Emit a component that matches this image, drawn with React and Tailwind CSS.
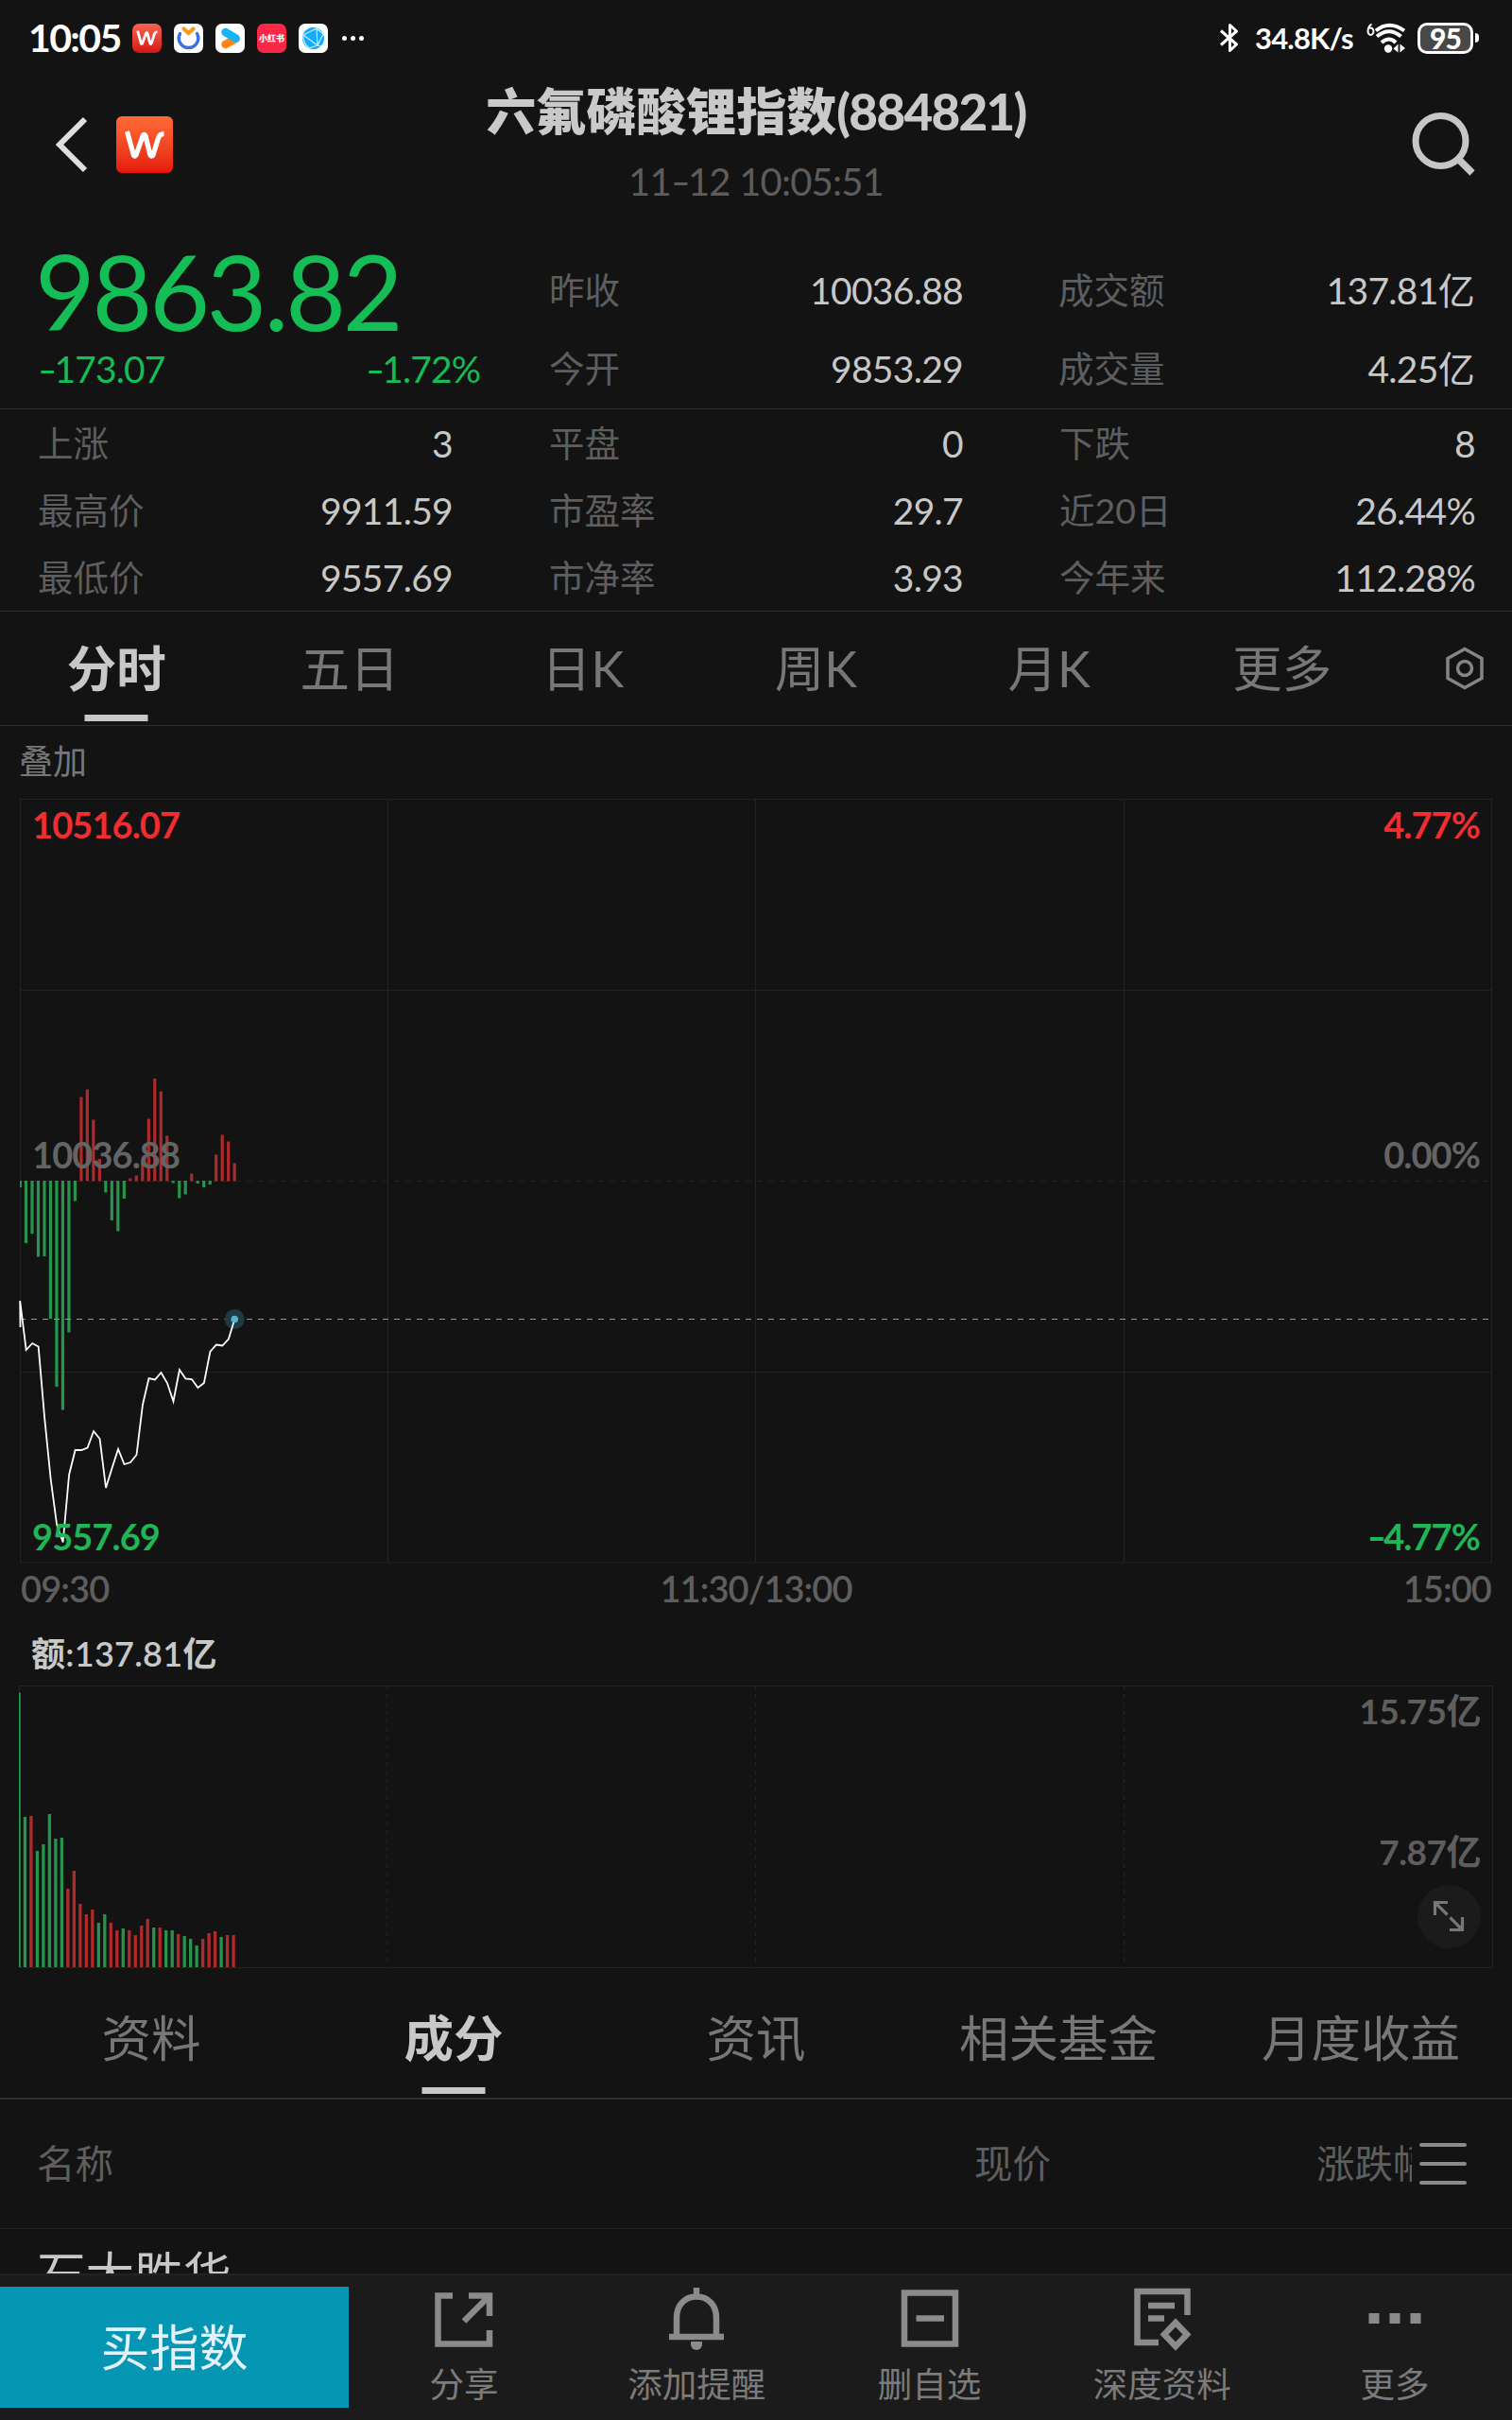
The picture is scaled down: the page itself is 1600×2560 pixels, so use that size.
import React from "react";

const GREEN = "#26944c";
const RED = "#b02a2b";
const STEP = 6.49;

// Signed bar lengths around the previous close, in chart pixels
const momentum = [
  -7, -66, -56, -80.5, -80, -146, -218, -242.5, -160.5, -21.5, 89, 97, 65, 23.5, -12.5, -42, -53.5, -19,
  3, 6, 21, 66, 108.5, 95, 48, -2.5, -18.5, -14.5, 8, -3, -7, -4, 28, 49, 42, 19,
];
const price = [
  531, 583, 576, 579.5, 655, 719.5, 768, 786.5, 715, 689, 689, 686.5, 669, 677, 729, 708, 688, 704, 702,
  694, 641, 613, 614.5, 607, 618, 637.5, 604, 613.5, 614, 623, 618, 585, 577.5, 578.5, 571.5, 550.5,
];
const volume = [
  290.5, 159, 160, 123, 130, 162, 136, 137, 83, 102, 67, 56, 61, 47, 56, 47, 39, 41, 39, 34, 44, 51, 42, 42,
  39, 39, 35, 33, 30, 23, 30, 36, 38, 32, 34, 34,
];
const volumeUp = "001000001111100110111101001000111011";

function AppBadge({ children, className }) {
  return <div className={`flex size-[31px] items-center justify-center overflow-hidden rounded-[7px] ${className}`}>{children}</div>;
}

function LogoW({ className }) {
  return (
    <svg viewBox="0 0 42 30" className={className} fill="none" stroke="white" strokeWidth="5.2" strokeLinejoin="round">
      <path d="M2.500 1 9.500 26.500Q10.500 28 12 26L19 6Q20.500 2.500 22 6L27 26Q28.500 28.500 30 26L35.500 8Q37 3.500 41.500 3.500" />
    </svg>
  );
}

function StatusBar() {
  return (
    <div className="flex h-[80px] items-center justify-between pl-[30px] pr-[35px] text-white">
      <div className="flex items-center">
        <span className="w-[110px] whitespace-nowrap text-[41px] font-bold leading-[50px] tracking-[-1.6px]">10:05</span>
        <div className="flex gap-[13px]">
          <AppBadge className="bg-linear-to-b from-[#f8604f] to-[#d40f12]">
            <LogoW className="h-[16px] w-[23px]" />
          </AppBadge>
          <AppBadge className="bg-white">
            <svg viewBox="0 0 31 31" className="size-[31px]" fill="none">
              <path d="M6.500 10.500A10.200 10.200 0 1 0 24.500 10.500" stroke="#3d6fe6" strokeWidth="3.400" strokeLinecap="round" />
              <path d="M10.500 5.500 15.500 10 20.500 5.500" stroke="#f59b22" strokeWidth="4.200" strokeLinecap="round" />
            </svg>
          </AppBadge>
          <AppBadge className="bg-white">
            <svg viewBox="0 0 31 31" className="size-[31px]" fill="none" strokeLinecap="round" strokeLinejoin="round">
              <path d="M10.500 22 21.500 16" stroke="#ff8616" strokeWidth="8.500" />
              <path d="M10.500 9 21.500 15.500" stroke="#15b4f7" strokeWidth="8.500" />
            </svg>
          </AppBadge>
          <AppBadge className="bg-[#fb2747]">
            <span className="whitespace-nowrap text-[9px] font-black leading-none">小红书</span>
          </AppBadge>
          <AppBadge className="bg-white">
            <svg viewBox="0 0 31 31" className="size-[31px]" fill="none" stroke="#c4efff" strokeWidth="1.200">
              <circle cx="15.500" cy="15.500" r="11.500" fill="#14abfb" stroke="none" />
              <path d="M5 12 19 5M5 12 20 23M19 5 20 23M19 5 26 11M20 23 26 11M5 12Q4 20 11 26L20 23 24 24" />
            </svg>
          </AppBadge>
        </div>
        <div className="ml-[15px] flex gap-[4px]">
          <i className="size-[5px] rounded-full bg-white" />
          <i className="size-[5px] rounded-full bg-white" />
          <i className="size-[5px] rounded-full bg-white" />
        </div>
      </div>
      <div className="flex items-center">
        <svg viewBox="0 0 20 32" className="h-[32px] w-[20px]" fill="none" stroke="white" strokeWidth="3" strokeLinejoin="round">
          <path d="M1 8.500 17.500 23 10.500 29.500V2.500L17.500 9 1 23.500" />
        </svg>
        <span className="ml-[17px] w-[117px] whitespace-nowrap text-[31px] font-bold leading-[40px] tracking-[-0.8px]">34.8K/s</span>
        <svg viewBox="0 0 44 34" className="h-[34px] w-[44px]" fill="none" stroke="white">
          <path d="M6.500 2.500Q2.500 5 2.500 10A3 3.700 0 1 0 4 7" strokeWidth="2" />
          <path d="M11 9.500Q25 -2 41 9.500M12 15.500Q25 5 37.500 15.500M17 22Q25 15 32 22" strokeWidth="4" />
          <circle cx="24" cy="28.500" r="4.200" fill="white" stroke="none" />
          <path d="M34.500 23.500V32.500L29.500 28.500ZM36.500 23.500V32.500L42 28Z" fill="white" stroke="none" />
        </svg>
        <div className="ml-[11px] flex h-[33px] w-[59px] items-center justify-center rounded-[10px] border-[3px] border-white bg-[#484848] text-[30px] font-black leading-none tracking-[-0.8px]">
          95
        </div>
        <i className="ml-[2px] h-[10px] w-[4px] rounded-r-full bg-white" />
      </div>
    </div>
  );
}

function Header() {
  return (
    <div className="flex h-[160px] justify-between pl-[56px] pr-[38px]">
      <div className="flex w-[200px] items-center pb-[14px]">
        <svg viewBox="0 0 36 60" className="h-[60px] w-[36px]" fill="none" stroke="#dedede" strokeWidth="6">
          <path d="M34 3 7 30 34 57" />
        </svg>
        <div className="ml-[31px] flex size-[60px] items-center justify-center rounded-[6px] bg-linear-to-b from-[#ff6a37] to-[#e5120a]">
          <LogoW className="h-[30px] w-[42px]" />
        </div>
      </div>
      <div className="flex flex-col items-center">
        <h1 className="mt-[4px] whitespace-nowrap text-[53px] font-black leading-[68px] text-[#c9c9c9]">
          六氟磷酸锂指数<span className="tracking-[-1.7px]">(884821)</span>
        </h1>
        <p className="mt-[16px] text-[40px] leading-[48px] tracking-[-0.8px] text-[#5c5c5c]">
          11<Minus />12 10:05:51
        </p>
      </div>
      <div className="flex w-[218px] items-start justify-end pt-[37px]">
        <svg viewBox="0 0 70 70" className="size-[70px]" fill="none" stroke="#c6c6c6" strokeWidth="7">
          <circle cx="32.500" cy="32" r="26.500" />
          <path d="M51 51 66 66" strokeWidth="7.500" />
        </svg>
      </div>
    </div>
  );
}

// Hyphen stretched to the width of a minus sign
function Minus() {
  return <span className="mr-[4px] inline-block origin-left scale-x-[1.4]">-</span>;
}

function Pair({ label, value, className = "" }) {
  return (
    <div className={`flex items-center justify-between whitespace-nowrap text-[37.5px] leading-[48px] ${className}`}>
      <span className="text-[#5e5e5e]">{label}</span>
      <span className="text-[39px] tracking-[-0.7px] text-[#c8c8c8]">{value}</span>
    </div>
  );
}

function Quote() {
  return (
    <>
      <section className="flex h-[193px] border-b border-[#303030] pl-[40px] pr-[39px] pt-[9px]">
        <div className="w-[468px] text-[#14bd55]">
          <div className="-ml-[3px] h-[117px] text-[110px] leading-[117px] tracking-[-3.2px]">9863.82</div>
          <div className="flex justify-between text-[39px] leading-[48px] tracking-[-0.9px]">
            <span><Minus />173.07</span>
            <span><Minus />1.72%</span>
          </div>
        </div>
        <div className="ml-[73px] w-[438px] pt-[34px]">
          <Pair label="昨收" value="10036.88" />
          <Pair label="今开" value="9853.29" className="mt-[35px]" />
        </div>
        <div className="ml-[101px] w-[440px] pt-[34px]">
          <Pair label="成交额" value="137.81亿" />
          <Pair label="成交量" value="4.25亿" className="mt-[35px]" />
        </div>
      </section>
      <section className="grid h-[214px] grid-cols-[439px_438px_440px] content-start gap-x-[102px] gap-y-[23px] border-b border-[#303030] pl-[40px] pt-[12px]">
        <Pair label="上涨" value="3" />
        <Pair label="平盘" value="0" />
        <Pair label="下跌" value="8" />
        <Pair label="最高价" value="9911.59" />
        <Pair label="市盈率" value="29.7" />
        <Pair label="近20日" value="26.44%" />
        <Pair label="最低价" value="9557.69" />
        <Pair label="市净率" value="3.93" />
        <Pair label="今年来" value="112.28%" />
      </section>
    </>
  );
}

function Tab({ label, active, className = "" }) {
  return (
    <div className={`relative flex flex-1 items-center justify-center whitespace-nowrap text-[52.5px] leading-[64px] ${active ? "font-bold text-[#c8c8c8]" : "text-[#777]"} ${className}`}>
      {label}
      {active && <i className="absolute bottom-[4px] left-1/2 h-[7px] w-[67px] -translate-x-1/2 bg-[#c8c8c8]" />}
    </div>
  );
}

function PeriodTabs() {
  return (
    <nav className="flex h-[121px] border-b border-[#303030]">
      <div className="flex w-[1480px]">
        {["分时", "五日", "日K", "周K", "月K", "更多"].map((t, i) => (
          <Tab key={t} label={t} active={i === 0} />
        ))}
      </div>
      <div className="flex flex-1 items-center pl-[47px]">
        <svg viewBox="0 0 46 46" className="size-[46px]" fill="none" stroke="#858585" strokeWidth="3.500">
          <path d="M23 2.500 41 12.500V33.500L23 43.500 5 33.500V12.500Z" />
          <circle cx="23" cy="23" r="7.500" />
        </svg>
      </div>
    </nav>
  );
}

function PriceChart() {
  const label = "absolute text-[38px] font-bold leading-[40px] tracking-[-0.9px]";
  return (
    <div className="relative mx-[20px] h-[810px]">
      <svg viewBox="0 0 1560 810" className="h-[810px] w-[1560px]" fill="none">
        <g stroke="#232323" strokeWidth="1">
          <rect x="1.500" y="0.500" width="1557" height="807.500" />
          <path d="M390.500 0V808M779.500 0V808M1169.500 0V808M1 202.500H1559M1 606.500H1559" />
          <path d="M1 404.500H1559" strokeDasharray="6 6" />
        </g>
        {momentum.map((v, i) => (
          <rect key={i} x={i ? i * STEP - 0.6 : 1} width={i ? 3.2 : 2} y={v > 0 ? 404.5 - v : 404} height={Math.abs(v)} fill={v > 0 ? RED : GREEN} />
        ))}
        <path d="M1 550.500H1559" stroke="#c88f52" strokeWidth="1.200" strokeDasharray="6 6" />
        <circle cx="228.200" cy="550.500" r="10.500" fill="#1f3a42" />
        <polyline points={"1.5,559 " + price.map((v, i) => `${1.2 + i * STEP},${v}`).join(" ")} stroke="white" strokeWidth="1.800" />
        <circle cx="228.200" cy="550.500" r="3.800" fill="#5ab4cf" />
      </svg>
      <span className={`${label} left-[14px] top-[7px] text-[#f02d30]`}>10516.07</span>
      <span className={`${label} right-[14px] top-[7px] text-[#f02d30]`}>4.77%</span>
      <span className={`${label} left-[14px] top-[356px] text-[#646464]`}>10036.88</span>
      <span className={`${label} right-[14px] top-[356px] text-[#646464]`}>0.00%</span>
      <span className={`${label} left-[14px] top-[760px] text-[#1fb656]`}>9557.69</span>
      <span className={`${label} right-[14px] top-[760px] text-[#1fb656]`}><Minus />4.77%</span>
    </div>
  );
}

function VolumeChart() {
  const label = "absolute right-[13px] text-[37px] font-bold leading-[40px] tracking-[-0.5px] text-[#5e5e5e]";
  return (
    <div className="relative mx-[20px] h-[300px]">
      <svg viewBox="0 0 1560 300" className="h-[300px] w-[1560px]" fill="none">
        <g stroke="#232323">
          <rect x="0.500" y="0.500" width="1559" height="298" />
          <path d="M389.500 0V298M779.500 0V298M1169.500 0V298" strokeDasharray="4 5" />
        </g>
        {volume.map((v, i) => (
          <rect key={i} x={i ? i * STEP - 1.7 : 0} width={i ? 3.3 : 1.8} y={298 - v} height={v} fill={volumeUp[i] === "1" ? RED : GREEN} />
        ))}
      </svg>
      <span className={`${label} top-[7px]`}>15.75亿</span>
      <span className={`${label} top-[156px]`}>7.87亿</span>
      <div className="absolute right-[13px] top-[211px] flex size-[67px] items-center justify-center rounded-full bg-[#1b1b1b]">
        <svg viewBox="0 0 34 34" className="mr-[2px] mb-[2px] size-[34px]" fill="none" stroke="#777" strokeWidth="3.200">
          <path d="M16 2.500H2.500V16M2.500 2.500 15.500 15.500M18 31.500H31.500V18M31.500 31.500 18.500 18.500" />
        </svg>
      </div>
    </div>
  );
}

function ToolItem({ label, children }) {
  return (
    <div className="flex flex-1 flex-col items-center">
      <svg viewBox="0 0 66 68" className="mt-[12px] mr-[2px] h-[68px] w-[66px]" fill="none" stroke="#8b8b8b" strokeWidth="6.500">
        {children}
      </svg>
      <span className="mt-[13px] mr-[2px] whitespace-nowrap text-[36.500px] leading-[44px] text-[#7b7b7b]">{label}</span>
    </div>
  );
}

function BottomBar() {
  return (
    <footer className="flex h-[155px] border-t-2 border-[#222] bg-[#1b1b1b]">
      <div className="mt-[12px] flex h-[128px] w-[369px] items-center justify-center bg-[#0596b4] text-[52px] leading-none text-[#e2f3ff]">买指数</div>
      <ToolItem label="分享">
        <path d="M21 9.500H5.500V60.500H60V46M38 9.500H60V31M59 10.500 33 36.500" />
      </ToolItem>
      <ToolItem label="添加提醒">
        <path d="M12 52V33C12 20 20 10.500 33 10.500S54 20 54 33V52M4 53H62M33 1V12" />
        <path d="M27 58H39V61A6 6 0 0 1 27 61Z" fill="#8b8b8b" stroke="none" />
      </ToolItem>
      <ToolItem label="删自选">
        <path d="M6 6.500H60V60.500H6ZM18.500 33.500H48" />
      </ToolItem>
      <ToolItem label="深度资料">
        <path d="M29 59H6.500V5H59.500V30M18 20H46M18 33.500H35M47 38 59 50.500 47 63 35 50.500Z" />
      </ToolItem>
      <ToolItem label="更多">
        <path d="M5.500 33.500H16.500M27.500 33.500H38.500M49.500 33.500H60.500" strokeWidth="11" />
      </ToolItem>
    </footer>
  );
}

export default function App() {
  return (
    <div className="flex h-[2560px] w-[1600px] flex-col overflow-hidden bg-[#131313] font-['Lato','Noto_Sans_CJK_SC',sans-serif]">
      <StatusBar />
      <Header />
      <Quote />
      <PeriodTabs />
      <div className="flex h-[77px] items-center pb-[3px] pl-[20px] text-[36px] leading-[44px] text-[#777]">叠加</div>
      <PriceChart />
      <div className="grid h-[54px] grid-cols-3 px-[22px] text-[38px] font-semibold leading-[51px] tracking-[-0.9px] text-[#5e5e5e]">
        <span>09:30</span>
        <span className="text-center">11:30/13:00</span>
        <span className="text-right">15:00</span>
      </div>
      <div className="h-[74px] pl-[33px] pt-[18px] text-[36px] font-semibold leading-[44px] tracking-[0.300px] text-[#c8c8c8]">额:137.81亿</div>
      <VolumeChart />
      <nav className="flex h-[138px] border-b-2 border-[#303030]">
        {["资料", "成分", "资讯", "相关基金", "月度收益"].map((t, i) => (
          <Tab key={t} label={t} active={i === 1} className="pt-[10px]" />
        ))}
      </nav>
      <div className="flex h-[137px] items-center border-b border-[#242424] pl-[39px] pr-[48px] text-[40.5px] leading-[50px] text-[#5e5e5e]">
        <span className="w-[992px]">名称</span>
        <span className="w-[362px]">现价</span>
        <span className="w-[101px] overflow-hidden whitespace-nowrap">涨跌幅</span>
        <div className="ml-[8px] flex flex-col gap-[16px]">
          <i className="h-[4px] w-[50px] rounded-full bg-[#8a8a8a]" />
          <i className="h-[4px] w-[50px] rounded-full bg-[#8a8a8a]" />
          <i className="h-[4px] w-[50px] rounded-full bg-[#8a8a8a]" />
        </div>
      </div>
      <div className="h-[47px] overflow-hidden pl-[39px] pt-[15px] text-[51.5px] leading-[64px] text-[#c8c8c8]">石大胜华</div>
      <BottomBar />
    </div>
  );
}
